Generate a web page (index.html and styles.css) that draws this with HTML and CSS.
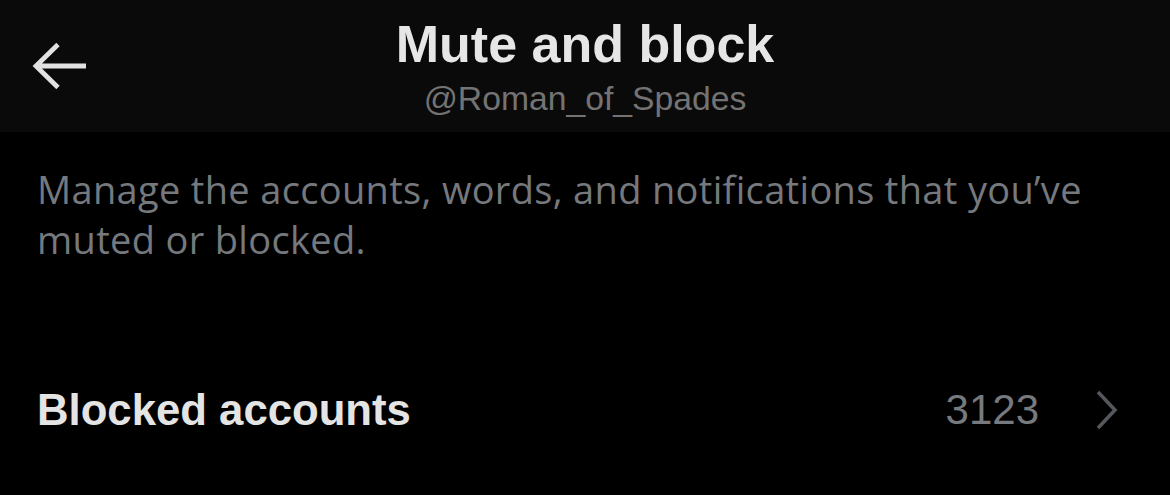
FILE: index.html
```html
<!DOCTYPE html>
<html lang="en">
<head>
<meta charset="utf-8">
<title>Mute and block</title>
<link rel="stylesheet" href="styles.css">
</head>
<body>
<header class="topbar">
  <div class="back">
    <svg width="56" height="48" viewBox="0 0 56 48" aria-hidden="true">
      <path d="M4 24 H54 M26 2.5 L4 24 L26 45.5" fill="none" stroke="#e2e2e2" stroke-width="4.8" stroke-linejoin="miter"/>
    </svg>
  </div>
  <div class="titles">
    <h1 class="title">Mute and block</h1>
    <div class="handle">@Roman_of_Spades</div>
  </div>
  <div class="spacer"></div>
</header>
<main class="content">
  <p class="desc">Manage the accounts, words, and notifications that you’ve muted or blocked.</p>
  <div class="row">
    <span class="row-label">Blocked accounts</span>
    <span class="row-count">3123</span>
    <svg class="chev" width="28" height="42" viewBox="0 0 28 42" aria-hidden="true">
      <path d="M5 3 L22 21 L5 39" fill="none" stroke="#54575b" stroke-width="3.6"/>
    </svg>
  </div>
</main>
</body>
</html>
```

FILE: styles.css
```css
html, body {
  margin: 0;
  padding: 0;
  background: #000;
}
body {
  width: 1170px;
  height: 495px;
  overflow: hidden;
  font-family: "Liberation Sans", Arial, sans-serif;
}
.topbar {
  height: 132px;
  box-sizing: border-box;
  background: #0a0a0a;
  display: grid;
  grid-template-columns: 1fr auto 1fr;
  align-items: center;
}
.back {
  padding-left: 32px;
  display: flex;
  align-items: center;
}
.back svg { display: block; }
.titles {
  display: flex;
  flex-direction: column;
  align-items: center;
  padding-top: 16px;
  padding-bottom: 14px;
  align-self: stretch;
  box-sizing: border-box;
}
.title {
  margin: 0;
  font-size: 52px;
  line-height: 56px;
  font-weight: 700;
  color: #e6e6e6;
}
.handle {
  margin-top: 6px;
  font-size: 33.7px;
  line-height: 40px;
  color: #737373;
}
.content {
  padding: 32px 49px 0 37px;
}
.desc {
  margin: 0;
  max-width: 1070px;
  font-family: "Open Sans", "Liberation Sans", sans-serif;
  font-size: 38px;
  letter-spacing: 0.33px;
  line-height: 50px;
  color: #75797e;
}
.row {
  margin-top: 116px;
  display: flex;
  align-items: center;
  height: 60px;
}
.row-label {
  flex: 1;
  font-size: 43.7px;
  line-height: 60px;
  font-weight: 700;
  color: #e4e4e4;
}
.row-count {
  font-size: 42px;
  line-height: 60px;
  color: #767a7f;
  margin-right: 54px;
}
.chev { display: block; }
```
